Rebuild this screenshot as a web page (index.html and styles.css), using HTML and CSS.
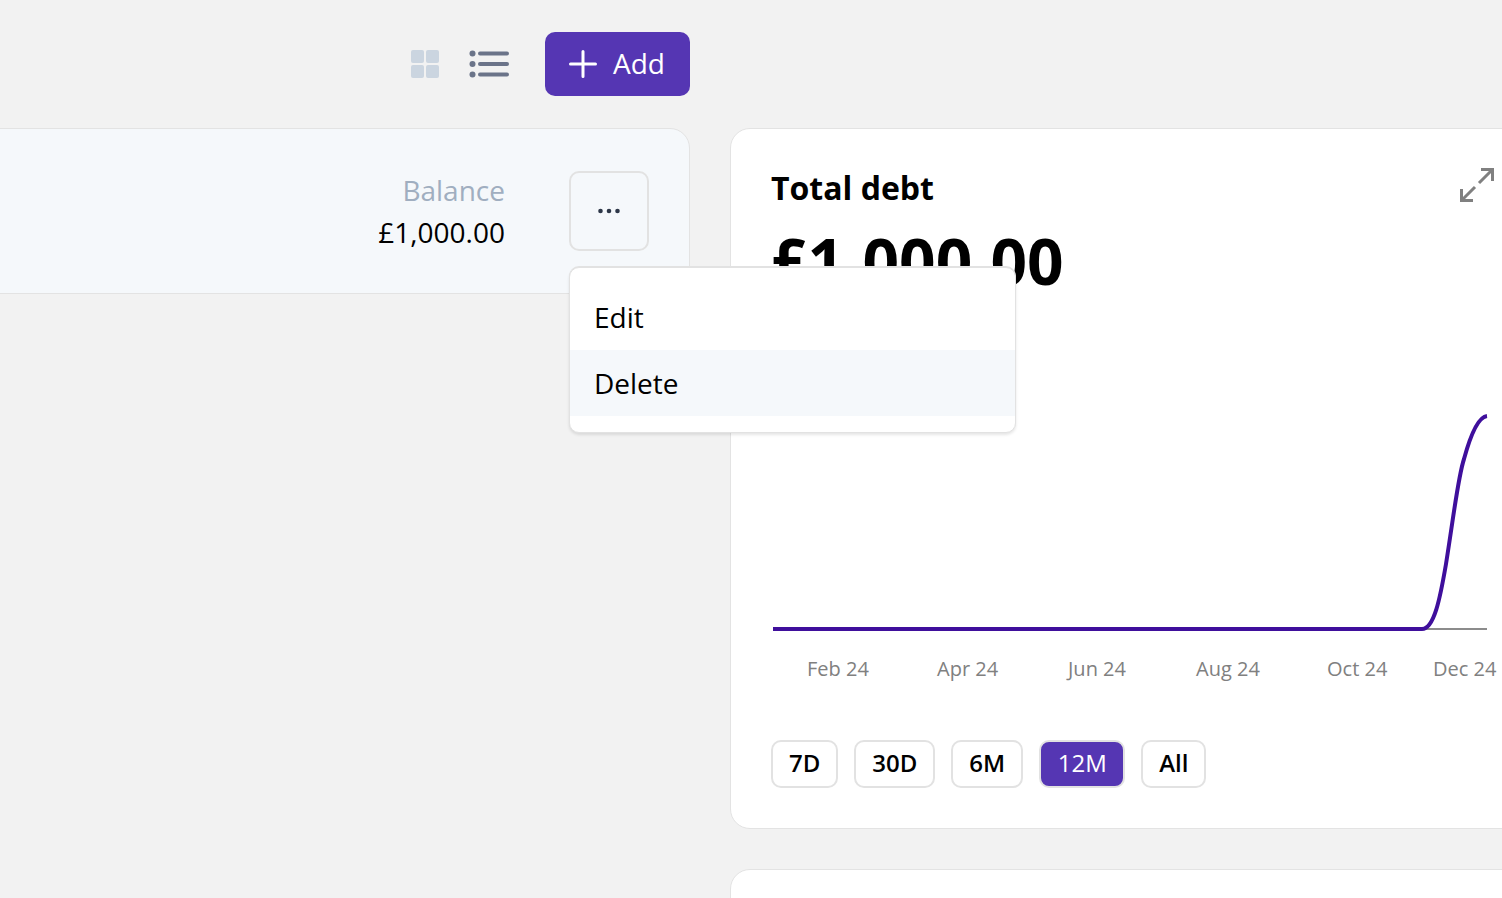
FILE: index.html
```html
<!DOCTYPE html>
<html lang="en">
<head>
<meta charset="utf-8">
<title>Total debt</title>
<link rel="stylesheet" href="styles.css">
</head>
<body>
<div class="layout">
  <section class="left">
    <div class="toolbar">
      <svg class="icon-grid" width="28" height="28" viewBox="0 0 28 28"><rect x="0" y="0" width="13" height="13" rx="2"/><rect x="15" y="0" width="13" height="13" rx="2"/><rect x="0" y="15" width="13" height="13" rx="2"/><rect x="15" y="15" width="13" height="13" rx="2"/></svg>
      <svg class="icon-list" width="40" height="28" viewBox="0 0 40 28"><circle cx="3.500" cy="3.500" r="3"/><circle cx="3.500" cy="14" r="3"/><circle cx="3.500" cy="24.500" r="3"/><rect x="9" y="1.500" width="31" height="4" rx="2"/><rect x="9" y="12" width="31" height="4" rx="2"/><rect x="9" y="22.500" width="31" height="4" rx="2"/></svg>
      <button class="add"><svg width="28" height="28" viewBox="0 0 28 28"><path d="M14 1.500V26.500M1.500 14H26.500" stroke="#fff" stroke-width="3" stroke-linecap="round" fill="none"/></svg><span>Add</span></button>
    </div>
    <div class="account">
      <div class="balance">
        <div class="balance-label">Balance</div>
        <div class="balance-value">£1,000.00</div>
      </div>
      <div class="more-wrap">
        <button class="more"><svg width="24" height="6" viewBox="0 0 24 6"><circle cx="3.500" cy="3" r="2.300"/><circle cx="12" cy="3" r="2.300"/><circle cx="20.500" cy="3" r="2.300"/></svg></button>
        <div class="menu">
          <div class="menu-item">Edit</div>
          <div class="menu-item active">Delete</div>
        </div>
      </div>
    </div>
  </section>
  <section class="right">
    <div class="card">
      <div class="card-head">
        <h2 class="card-title">Total debt</h2>
        <svg class="expand" width="34" height="34" viewBox="0 0 34 34"><path d="M21 1.500H32.500V13M32 2L19 15M13 32.500H1.500V21M2 32L15 19" stroke="#808080" stroke-width="3" fill="none"/></svg>
      </div>
      <div class="amount">£1,000.00</div>
      <svg class="chart" width="718" height="258" viewBox="0 0 718 258">
        <path d="M3 220H717" stroke="#8c8c8c" stroke-width="2" fill="none"/>
        <path d="M3 220H652C664 220 670 190 676 155C684 105 688 68 694 50C700 28 708 8 717 7" stroke="#3f0f9c" stroke-width="4" fill="none"/>
      </svg>
      <div class="axis">
        <span class="tick t1">Feb 24</span>
        <span class="tick t2">Apr 24</span>
        <span class="tick t3">Jun 24</span>
        <span class="tick t4">Aug 24</span>
        <span class="tick t5">Oct 24</span>
        <span class="tick t6">Dec 24</span>
      </div>
      <div class="ranges">
        <button class="range">7D</button>
        <button class="range">30D</button>
        <button class="range">6M</button>
        <button class="range selected">12M</button>
        <button class="range">All</button>
      </div>
    </div>
    <div class="card card-next"></div>
  </section>
</div>
</body>
</html>
```
FILE: styles.css
```css
* { box-sizing: border-box; }
html, body { margin: 0; height: 100%; overflow: hidden; }
body { background: #f2f2f2; font-family: "Open Sans", "Liberation Sans", sans-serif; color: #000; }
button { font-family: inherit; cursor: pointer; }
.layout { display: flex; gap: 40px; width: 1600px; height: 898px; padding-top: 32px; overflow: hidden; }
.left { width: 690px; flex: none; }
.toolbar { display: flex; align-items: center; justify-content: flex-end; height: 64px; margin-bottom: 32px; }
.icon-grid { fill: #cbd5e0; margin-right: 30px; }
.icon-list { fill: #6b7489; margin-right: 36px; }
.add { display: flex; align-items: center; gap: 16px; width: 145px; height: 64px; padding: 0 24px; border: 0; border-radius: 10px; background: #5536b3; color: #fff; font-size: 28px; }
.add span { line-height: 36px; margin-top: -2px; }
.account { display: flex; align-items: center; justify-content: flex-end; height: 166px; margin-left: -20px; padding-right: 40px; background: #f5f8fb; border: 1px solid #e3e3e3; border-radius: 0 20px 0 0; }
.balance { text-align: right; margin-right: 64px; }
.balance-label { color: #a0aec0; font-size: 28px; line-height: 42px; }
.balance-value { font-size: 28px; line-height: 42px; }
.more-wrap { position: relative; }
.more { display: flex; align-items: center; justify-content: center; width: 80px; height: 80px; padding: 0; background: transparent; border: 2px solid #e2e2e2; border-radius: 10px; }
.more svg { fill: #2d3748; }
.menu { position: absolute; z-index: 2; top: 96px; left: 0; width: 447px; height: 166px; padding: 16px 0; background: #fff; border: 1px solid #e2e2e2; border-radius: 10px; box-shadow: 0 -1px 0 #e2e2e2, 0 2px 3px rgba(0,0,0,.1); }
.menu-item { height: 66px; padding: 0 24px; font-size: 28px; line-height: 66px; }
.menu-item.active { background: #f5f8fb; }
.right { width: 800px; flex: none; padding-top: 96px; }
.card { height: 701px; padding: 40px; background: #fff; border: 1px solid #e3e3e3; border-radius: 20px; }
.card-next { margin-top: 40px; height: 200px; }
.card-head { display: flex; align-items: flex-start; justify-content: space-between; height: 42px; }
.card-title { margin: -2px 0 0; font-size: 32px; font-weight: 700; line-height: 42px; }
.expand { margin: -1px -5px 0 0; flex: none; }
.amount { margin-top: 10px; font-size: 64px; font-weight: 700; line-height: 80px; }
.chart { display: block; margin: 108px 0 0 -1px; }
.axis { position: relative; height: 28px; margin-top: -12px; color: #808080; font-size: 20px; line-height: 28px; }
.tick { position: absolute; top: 0; white-space: nowrap; }
.t1 { left: 36px; }
.t2 { left: 166px; }
.t3 { left: 297px; }
.t4 { left: 425px; }
.t5 { left: 556px; }
.t6 { left: 662px; }
.ranges { display: flex; gap: 16px; margin-top: 57px; }
.range { height: 48px; padding: 0 16px 2px; background: #fff; border: 2px solid #e2e2e2; border-radius: 10px; color: #000; font-size: 24px; font-weight: 600; line-height: 42px; }
.range.selected { padding: 0 16.5px 2px; background: #5536b3; color: #fff; font-weight: 400; }
```
